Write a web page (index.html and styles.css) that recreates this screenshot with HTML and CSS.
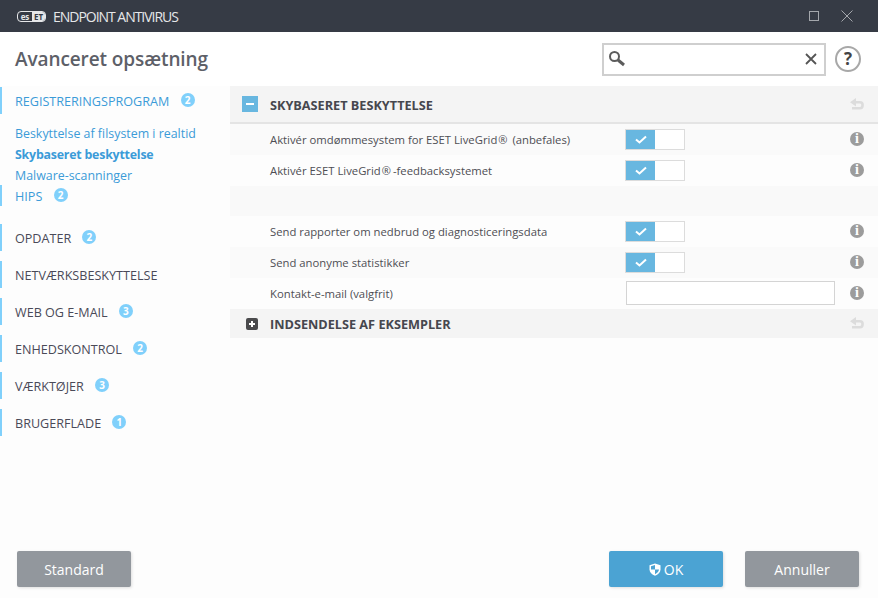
FILE: index.html
```html
<!DOCTYPE html>
<html lang="da">
<head>
    <meta charset="UTF-8">
    <title>ESET Endpoint Antivirus</title>
    <link rel="stylesheet" href="styles.css">
</head>
<body>
    <header class="titlebar">
        <div class="brand">
            <span class="logo"><span class="logo-es">es</span><span class="logo-et">ET</span></span>
            <span class="product">ENDPOINT ANTIVIRUS</span>
        </div>
        <div class="window-buttons">
            <svg width="12" height="12" viewBox="0 0 12 12"><rect x="1.5" y="1.5" width="9" height="9" fill="none" stroke="#a4a7ac" stroke-width="1"/></svg>
            <svg width="12" height="12" viewBox="0 0 12 12"><path d="M0.5 0.5L11.5 11.5M11.5 0.5L0.5 11.5" fill="none" stroke="#a4a7ac" stroke-width="1"/></svg>
        </div>
    </header>

    <div class="topbar">
        <h1>Avanceret opsætning</h1>
        <div class="search">
            <svg class="search-icon" width="18" height="18" viewBox="0 0 18 18"><circle cx="6.5" cy="6.5" r="4.5" fill="none" stroke="#5c5c5c" stroke-width="2"/><path d="M10 10l6 5" stroke="#5c5c5c" stroke-width="3" fill="none"/></svg>
            <svg class="search-clear" width="12" height="12" viewBox="0 0 12 12"><path d="M1 1L11 11M11 1L1 11" stroke="#555" stroke-width="1.8" fill="none"/></svg>
        </div>
        <div class="help">?</div>
    </div>

    <div class="main">
        <nav class="sidebar">
            <div class="nav-item active">REGISTRERINGSPROGRAM <span class="badge">2</span></div>
            <ul class="subnav">
                <li>Beskyttelse af filsystem i realtid</li>
                <li class="current">Skybaseret beskyttelse</li>
                <li>Malware-scanninger</li>
            </ul>
            <div class="nav-item active hips">HIPS <span class="badge">2</span></div>
            <div class="nav-item">OPDATER <span class="badge">2</span></div>
            <div class="nav-item">NETVÆRKSBESKYTTELSE</div>
            <div class="nav-item">WEB OG E-MAIL <span class="badge">3</span></div>
            <div class="nav-item">ENHEDSKONTROL <span class="badge">2</span></div>
            <div class="nav-item">VÆRKTØJER <span class="badge">3</span></div>
            <div class="nav-item">BRUGERFLADE <span class="badge">1</span></div>
        </nav>

        <section class="content">
            <div class="section-head open">
                <span class="expander minus"></span>
                <h2>SKYBASERET BESKYTTELSE</h2>
                <svg class="undo" width="14" height="13" viewBox="0 0 14 13"><path d="M6 0L0 4.2L6 8.4Z" fill="#dcdcdc"/><path d="M5 4.2H10C11.6 4.2 12.6 5.3 12.6 7C12.6 8.8 11.6 10.2 10 10.2H2" fill="none" stroke="#dcdcdc" stroke-width="2.6"/></svg>
            </div>

            <div class="row">
                <span class="row-label">Aktivér omdømmesystem for ESET LiveGrid<span class="reg">®</span> (anbefales)</span>
                <span class="toggle"><span class="toggle-on"><svg width="12" height="9" viewBox="0 0 12 9"><path d="M1 4.5L4.5 7.5L11 1.5" fill="none" stroke="#fff" stroke-width="2"/></svg></span></span>
                <span class="info">i</span>
            </div>
            <div class="row alt">
                <span class="row-label">Aktivér ESET LiveGrid<span class="reg">®</span>-feedbacksystemet</span>
                <span class="toggle"><span class="toggle-on"><svg width="12" height="9" viewBox="0 0 12 9"><path d="M1 4.5L4.5 7.5L11 1.5" fill="none" stroke="#fff" stroke-width="2"/></svg></span></span>
                <span class="info">i</span>
            </div>
            <div class="row spacer"></div>
            <div class="row alt">
                <span class="row-label">Send rapporter om nedbrud og diagnosticeringsdata</span>
                <span class="toggle"><span class="toggle-on"><svg width="12" height="9" viewBox="0 0 12 9"><path d="M1 4.5L4.5 7.5L11 1.5" fill="none" stroke="#fff" stroke-width="2"/></svg></span></span>
                <span class="info">i</span>
            </div>
            <div class="row">
                <span class="row-label">Send anonyme statistikker</span>
                <span class="toggle"><span class="toggle-on"><svg width="12" height="9" viewBox="0 0 12 9"><path d="M1 4.5L4.5 7.5L11 1.5" fill="none" stroke="#fff" stroke-width="2"/></svg></span></span>
                <span class="info">i</span>
            </div>
            <div class="row alt">
                <span class="row-label">Kontakt-e-mail (valgfrit)</span>
                <span class="text-input"></span>
                <span class="info">i</span>
            </div>

            <div class="section-head">
                <span class="expander plus"></span>
                <h2>INDSENDELSE AF EKSEMPLER</h2>
                <svg class="undo" width="14" height="13" viewBox="0 0 14 13"><path d="M6 0L0 4.2L6 8.4Z" fill="#dcdcdc"/><path d="M5 4.2H10C11.6 4.2 12.6 5.3 12.6 7C12.6 8.8 11.6 10.2 10 10.2H2" fill="none" stroke="#dcdcdc" stroke-width="2.6"/></svg>
            </div>
        </section>
    </div>

    <footer class="footer">
        <button class="button">Standard</button>
        <div class="footer-right">
            <button class="button primary">
                <svg width="12" height="13" viewBox="0 0 12 13"><path d="M6 0.5L11.5 2.2V6.5C11.5 9.5 9 11.6 6 12.8C3 11.6 0.5 9.5 0.5 6.5V2.2Z" fill="#fff"/><path d="M6 2V6.5H10C9.8 8.6 8 10.2 6 11.2V6.5H2V3.2Z" fill="#4ba3d3"/></svg>OK
            </button>
            <button class="button">Annuller</button>
        </div>
    </footer>
</body>
</html>
```

FILE: styles.css
```css
html, body {
    height: 100%;
}
body {
    margin: 0;
    display: flex;
    flex-direction: column;
    font-family: "Open Sans", "Noto Sans", sans-serif;
    background-color: #fdfdfd;
    color: #4a4a50;
    overflow: hidden;
}

/* title bar */
.titlebar {
    height: 32px;
    flex: none;
    display: flex;
    justify-content: space-between;
    align-items: center;
    padding: 0 25px 0 17px;
    background: #363b45;
    color: #e6e7e9;
}
.brand {
    display: flex;
    align-items: center;
}
.logo {
    display: flex;
    width: 29px;
    height: 11px;
    border: 1px solid #e6e7e9;
    border-radius: 4px;
    box-sizing: border-box;
    overflow: hidden;
    font-size: 8px;
    font-weight: 700;
    line-height: 9px;
    text-align: center;
}
.logo-es {
    width: 15px;
}
.logo-et {
    width: 14px;
    background: #e6e7e9;
    color: #363b45;
}
.product {
    margin-left: 7px;
    font-size: 14px;
    letter-spacing: -1.03px;
}
.window-buttons {
    display: flex;
    gap: 21px;
}

/* heading row */
.topbar {
    height: 54px;
    flex: none;
    display: flex;
    align-items: center;
    padding: 0 17px 0 15px;
    background: #fff;
}
.topbar h1 {
    margin: 0 auto 0 0;
    font-size: 19px;
    font-weight: 600;
    letter-spacing: -0.1px;
    color: #5d6068;
}
.search {
    width: 224px;
    height: 33px;
    box-sizing: border-box;
    border: 2px solid #cfcfcf;
    display: flex;
    justify-content: space-between;
    align-items: center;
    padding: 0 7px 0 4px;
    background: #fff;
}
.help {
    width: 26px;
    height: 26px;
    box-sizing: border-box;
    margin-left: 9px;
    border: 2px solid #a8a8a8;
    border-radius: 50%;
    text-align: center;
    font-size: 17px;
    font-weight: 700;
    line-height: 22px;
    color: #444;
}

.main {
    flex: 1;
    display: flex;
    min-height: 0;
}

/* left menu */
.sidebar {
    width: 230px;
    flex: none;
    padding-top: 1px;
}
.nav-item {
    height: 27px;
    margin-bottom: 10px;
    padding-left: 13px;
    border-left: 2px solid #80d0fb;
    font-size: 12.6px;
    line-height: 29px;
    color: #4a4a58;
    white-space: nowrap;
}
.nav-item.active {
    color: #3b9bd8;
}
.nav-item.hips {
    height: 21px;
    line-height: 23px;
    margin-bottom: 18px;
}
.badge {
    display: inline-block;
    width: 14px;
    height: 14px;
    margin-left: 8px;
    border-radius: 50%;
    background: #80d0fb;
    color: #fff;
    font-size: 10px;
    font-weight: 700;
    line-height: 14px;
    text-align: center;
    vertical-align: 2px;
}
.subnav {
    list-style: none;
    margin: -2px 0 0;
    padding: 0 0 0 15px;
}
.subnav li {
    height: 21px;
    font-size: 12.4px;
    line-height: 23px;
    color: #3b9bd8;
    white-space: nowrap;
}
.subnav li.current {
    font-weight: 700;
    letter-spacing: -0.22px;
}

/* settings list */
.content {
    flex: 1;
    min-width: 0;
}
.section-head {
    height: 29px;
    display: flex;
    align-items: center;
    background: #f4f4f4;
}
.section-head.open {
    border-bottom: 2px solid #e4e4e4;
    box-sizing: border-box;
    height: 38px;
}
.section-head h2 {
    margin: 0 auto 0 0;
    font-size: 12.7px;
    font-weight: 700;
    color: #46474e;
}
.section-head.open h2 {
    margin-top: 2px;
}
.expander {
    width: 16px;
    height: 16px;
    margin: 0 12px 0 12px;
    position: relative;
    background: #68b7e0;
}
.expander::before {
    content: "";
    position: absolute;
    left: 4px;
    top: 7px;
    width: 8px;
    height: 2px;
    background: #fff;
}
.expander.plus {
    width: 12px;
    height: 12px;
    margin: 0 12px 0 16px;
    border-radius: 2px;
    background: #4a4a4c;
}
.expander.plus::before {
    left: 3px;
    top: 5px;
    width: 6px;
}
.expander.plus::after {
    content: "";
    position: absolute;
    left: 5px;
    top: 3px;
    width: 2px;
    height: 6px;
    background: #fff;
}
.undo {
    margin-right: 14px;
}
.row {
    height: 31px;
    display: flex;
    align-items: center;
    background: #fafafa;
    position: relative;
}
.row.alt {
    background: #fdfdfd;
}
.row.spacer {
    height: 30px;
    background: #f9f9f9;
}
.row-label {
    width: 395px;
    padding-left: 40px;
    box-sizing: border-box;
    font-size: 11.3px;
    color: #4e4e54;
    white-space: nowrap;
}
.reg {
    margin: 0 2px 0 1px;
    font-size: 11px;
}
.toggle {
    width: 60px;
    height: 21px;
    box-sizing: border-box;
    border: 1px solid #dcdcdc;
    background: #fff;
}
.toggle-on {
    display: flex;
    width: 29px;
    height: 19px;
    justify-content: center;
    align-items: center;
    background: #68b7e0;
}
.text-input {
    width: 209px;
    height: 24px;
    margin: 0 0 1px 1px;
    box-sizing: border-box;
    border: 1px solid #d4d4d4;
    background: #fff;
}
.info {
    position: absolute;
    right: 14px;
    top: 8px;
    width: 14px;
    height: 14px;
    border-radius: 50%;
    background: #9c9c9c;
    color: #fff;
    font-family: "Liberation Serif", serif;
    font-size: 14px;
    font-weight: 700;
    line-height: 14px;
    text-align: center;
}

/* bottom buttons */
.footer {
    flex: none;
    display: flex;
    justify-content: space-between;
    padding: 0 19px 11px 17px;
}
.footer-right {
    display: flex;
    gap: 22px;
}
.button {
    width: 114px;
    height: 36px;
    padding: 0;
    border: none;
    border-radius: 2px;
    background: #92979d;
    color: #fff;
    font-family: inherit;
    font-size: 14px;
    box-shadow: 1px 1px 3px rgba(0, 0, 0, 0.12);
}
.button.primary {
    display: flex;
    justify-content: center;
    align-items: center;
    gap: 3px;
    background: #4ba3d3;
}
```
